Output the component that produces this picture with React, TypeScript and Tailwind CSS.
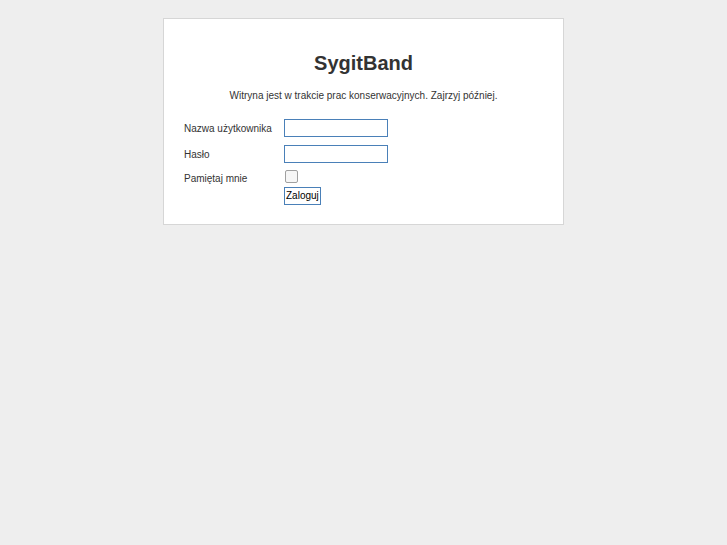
import React from 'react';

const App: React.FC = () => {
  return (
    <div className="min-h-[545px] bg-[#eeeeee] pt-[18px] font-['Liberation_Sans',Arial,sans-serif] text-[#333]">
      <div className="ml-[163px] w-[401px] border border-[#d6d6d6] bg-white px-5 pt-[32px] pb-[19px]">
        <h1 className="text-center text-[20px] font-bold leading-[24px] text-[#333]">SygitBand</h1>
        <p className="mt-[14px] text-center text-[10px] leading-[14px] text-[#333]">
          Witryna jest w trakcie prac konserwacyjnych. Zajrzyj później.
        </p>
        <form className="mt-[12px] flex flex-col" onSubmit={(e) => e.preventDefault()}>
          <div className="flex h-[26px] items-center">
            <label className="w-[100px] text-[10px] text-[#333]">Nazwa użytkownika</label>
            <input type="text" className="h-[18px] w-[104px] border border-[#4a80b8] bg-white outline-none" />
          </div>
          <div className="flex h-[26px] items-center">
            <label className="w-[100px] text-[10px] text-[#333]">Hasło</label>
            <input type="password" className="h-[18px] w-[104px] border border-[#4a80b8] bg-white outline-none" />
          </div>
          <div className="flex h-[20px] items-start">
            <label className="w-[100px] pt-[4px] text-[10px] leading-[15px] text-[#333]">Pamiętaj mnie</label>
            <span className="ml-[1px] mt-[3px] block h-[13px] w-[13px] rounded-[2px] border border-[#a0a0a0] bg-[#f6f6f6]" />
          </div>
          <div className="ml-[100px] flex">
            <button type="submit" className="h-[18px] border border-[#4a80b8] bg-white px-[1px] text-[10px] leading-[14px] text-black">
              Zaloguj
            </button>
          </div>
        </form>
      </div>
    </div>
  );
};

export default App;
